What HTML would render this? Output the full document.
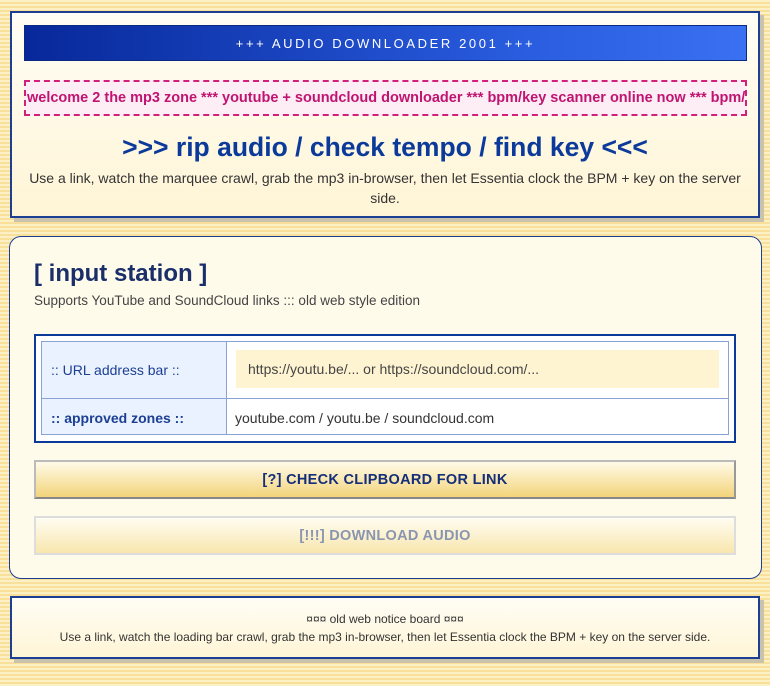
<!DOCTYPE html><html><head><style>
body{margin:0;width:770px;height:686px;overflow:hidden;font-family:"Liberation Sans",sans-serif;
background:repeating-linear-gradient(180deg,#fdf0c4 0 2px,#f8e09a 2px 4px);}
.p{position:absolute;box-sizing:border-box}
.top{left:10px;top:11px;width:750px;height:207px;border:2px solid #1c3f94;background:linear-gradient(#fffdf5,#fff5d6);box-shadow:4px 4px 0 #c9c2ad}
.hdr{left:12px;top:12px;width:723px;height:36px;background:linear-gradient(90deg,#07289a,#2a5de0 70%,#3a70f2);border:1px solid #0a2a80;color:#fff;font-size:13px;letter-spacing:2.6px;text-align:center;line-height:36px}
.mq{left:12px;top:67px;width:723px;height:36px;border:2px dashed #d0207a;background:#fdeef6;color:#c01470;font-weight:bold;font-size:14.5px;line-height:33px;white-space:nowrap;overflow:hidden;padding-left:1px}
h1{position:absolute;left:0;right:0;top:119px;margin:0;text-align:center;font-size:26.5px;color:#0b3a9a}
.d{position:absolute;left:14px;right:14px;top:155px;text-align:center;font-size:14px;color:#333;line-height:20px}
.mid{left:9px;top:236px;width:753px;height:343px;border:1px solid #1c3f94;border-radius:12px;background:#fffbeb}
h2{position:absolute;left:24px;top:23px;margin:0;font-size:24px;color:#1a2f6a}
.sub{position:absolute;left:24px;top:56px;font-size:13.5px;color:#444}
.tb{left:24px;top:97px;width:702px;height:109px;border:2px solid #0b3a9a;background:#fff}
.c{position:absolute;box-sizing:border-box;border:1px solid #8aa3d6;font-size:14px;color:#1c3f94}
.btn{left:24px;width:702px;height:39px;border:2px solid #bbb;border-bottom-color:#888;border-right-color:#999;background:linear-gradient(#fffbe8,#f3d47a);text-align:center;font-weight:bold;font-size:14.5px;line-height:37px;color:#152e7a;letter-spacing:.3px}
.bot{left:10px;top:596px;width:750px;height:63px;border:2px solid #1c3f94;background:linear-gradient(#fffdf5,#fff5d6);box-shadow:4px 4px 0 #c9c2ad;text-align:center;font-size:12px;color:#333}
</style></head><body>
<div class="p top">
<div class="p hdr">+++ AUDIO DOWNLOADER 2001 +++</div>
<div class="p mq">welcome 2 the mp3 zone *** youtube + soundcloud downloader *** bpm/key scanner online now *** bpm/key</div>
<h1>&gt;&gt;&gt; rip audio / check tempo / find key &lt;&lt;&lt;</h1>
<div class="d">Use a link, watch the marquee crawl, grab the mp3 in-browser, then let Essentia clock the BPM + key on the server side.</div>
</div>
<div class="p mid">
<h2>[ input station ]</h2>
<div class="sub">Supports YouTube and SoundCloud links ::: old web style edition</div>
<div class="p tb">
<div class="c" style="left:5px;top:5px;width:186px;height:58px;background:#eaf2ff;padding:20px 0 0 9px">:: URL address bar ::</div>
<div class="c" style="left:190px;top:5px;width:503px;height:58px;padding:8px 9px">
<div style="background:#fff4d2;height:38px;line-height:38px;padding-left:12px;color:#444">https://youtu.be/... or https://soundcloud.com/...</div></div>
<div class="c" style="left:5px;top:62px;width:186px;height:37px;background:#eaf2ff;padding:11px 0 0 9px;font-weight:bold">:: approved zones ::</div>
<div class="c" style="left:190px;top:62px;width:503px;height:37px;padding:11px 0 0 8px;color:#333">youtube.com / youtu.be / soundcloud.com</div>
</div>
<div class="p btn" style="top:223px">[?] CHECK CLIPBOARD FOR LINK</div>
<div class="p btn" style="top:279px;color:#8a96b0;border-color:#ddd;background:linear-gradient(#fffdf2,#f8e6ad)">[!!!] DOWNLOAD AUDIO</div>
</div>
<div class="p bot"><div style="margin-top:14px">¤¤¤ old web notice board ¤¤¤</div><div style="margin-top:4px">Use a link, watch the loading bar crawl, grab the mp3 in-browser, then let Essentia clock the BPM + key on the server side.</div></div>
</body></html>
